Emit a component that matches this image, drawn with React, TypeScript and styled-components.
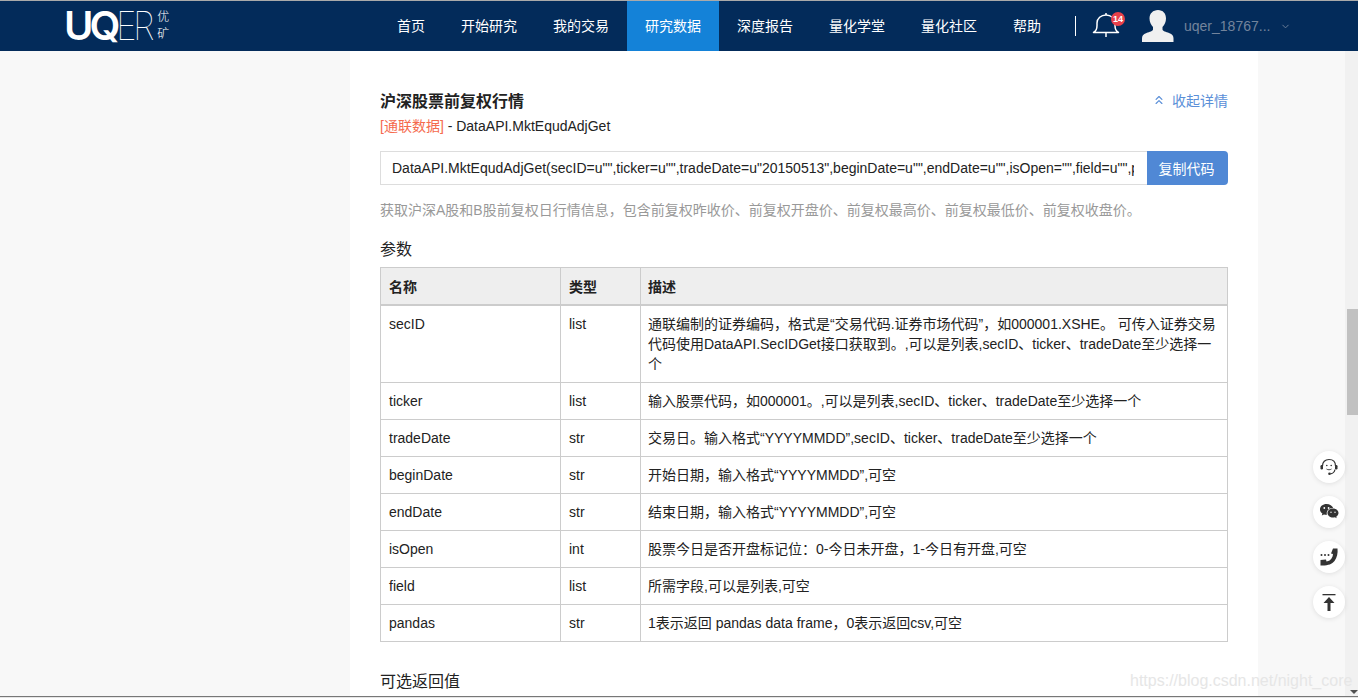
import React from 'react'
import styled, { createGlobalStyle } from 'styled-components'
import { ChevronDown, ChevronsUp } from 'lucide-react'

const FONT = '"Liberation Sans", "Noto Sans CJK SC", sans-serif'

const GlobalStyle = createGlobalStyle`
  html, body {
    margin: 0;
    height: 100%;
    overflow: hidden;
    background: #f8f8f8;
    font-family: ${FONT};
    font-size: 14px;
    color: #222;
  }
  * { box-sizing: border-box; }
`

const Page = styled.div`
  position: relative;
  width: 1358px;
  height: 698px;
  display: flex;
  flex-direction: column;
  overflow: hidden;
  border-top: 1px solid #aaa;
`

const Header = styled.header`
  flex: 0 0 50px;
  background: #032b5a;
  display: flex;
  align-items: stretch;
  padding-left: 64px;
`

const Logo = styled.div`
  display: flex;
  align-items: center;
  width: 315px;
  color: #fff;
`

const LogoBold = styled.span`
  font-family: "Inter", sans-serif;
  font-size: 40px;
  font-weight: 600;
  letter-spacing: -4px;
  line-height: 1;
`

const LogoThin = styled.span`
  display: inline-block;
  margin-right: -5px;
  font-family: "Inter", sans-serif;
  font-size: 40px;
  font-weight: 100;
  letter-spacing: -4px;
  line-height: 1;
  transform: scaleX(0.88);
  transform-origin: left center;
`

const LogoCn = styled.span`
  width: 12px;
  margin-left: 6px;
  font-size: 12px;
  font-weight: 300;
  line-height: 17px;
`

const Nav = styled.nav`
  display: flex;
  align-items: stretch;
`

const NavItem = styled.a<{ $active?: boolean }>`
  display: flex;
  align-items: center;
  padding: 0 18px 2px;
  font-size: 14px;
  color: #fff;
  background: ${({ $active }) => ($active ? '#1482d8' : 'transparent')};
`

const Divider = styled.span`
  width: 1px;
  height: 20px;
  margin: 15px 0 0 16px;
  background: #fff;
`

const BellWrap = styled.div`
  position: relative;
  width: 28px;
  margin-left: 16px;
  padding-top: 11px;
`

const Badge = styled.span`
  position: absolute;
  top: 11px;
  left: 19px;
  width: 14px;
  height: 14px;
  border-radius: 50%;
  background: #e8404a;
  color: #fff;
  font-size: 9px;
  font-weight: 700;
  line-height: 14px;
  text-align: center;
`

const UserArea = styled.div`
  display: flex;
  align-items: center;
  margin-left: 21px;
`

const UserName = styled.span`
  margin-left: 9px;
  padding-bottom: 1px;
  font-size: 14px;
  color: #73849c;
`

const UserCaret = styled.span`
  display: flex;
  margin-left: 10px;
  color: #73849c;
`

const Body = styled.div`
  flex: 1;
  min-height: 0;
  display: flex;
`

const SideSpace = styled.div<{ $width: number }>`
  flex: 0 0 ${({ $width }) => $width}px;
  background: #f8f8f8;
`

const Main = styled.main`
  flex: 0 0 908px;
  min-width: 0;
  background: #fff;
  padding: 39px 30px 0;
`

const ScrollTrack = styled.div`
  flex: 0 0 13px;
  background: #f1f1f1;
  padding: 258px 0 2px 2px;
  display: flex;
  flex-direction: column;
  justify-content: space-between;
`

const ScrollThumb = styled.div`
  height: 106px;
  background: #c1c1c1;
`

const ScrollArrow = styled.span`
  width: 0;
  height: 0;
  margin-left: 3px;
  border-left: 4px solid transparent;
  border-right: 4px solid transparent;
  border-top: 4px solid #505050;
`

const BottomEdge = styled.div`
  flex: 0 0 2px;
  border-top: 1px solid #777;
  background: #e6e6e6;
`

const TitleRow = styled.div`
  display: flex;
  justify-content: space-between;
  align-items: center;
  height: 20px;
`

const Title = styled.h2`
  margin: 0;
  font-size: 16px;
  font-weight: 700;
  color: #222;
`

const Collapse = styled.a`
  display: flex;
  align-items: center;
  gap: 6px;
  font-size: 14px;
  color: #5a8fd8;
`

const SubTitle = styled.div`
  margin-top: 8px;
  font-size: 14px;
  line-height: 16px;
  color: #222;
`

const Source = styled.span`
  color: #f56a4e;
`

const CodeRow = styled.div`
  display: flex;
  height: 34px;
  margin-top: 17px;
`

const CodeBox = styled.div`
  flex: 1;
  min-width: 0;
  padding: 0 13px 0 11px;
  border: 1px solid #ddd;
  border-right: 0;
`

const CodeText = styled.div`
  font-size: 14px;
  line-height: 32px;
  color: #222;
  white-space: nowrap;
  overflow: hidden;
`

const CopyButton = styled.button`
  flex: 0 0 81px;
  padding: 0 2px 0 0;
  border: 0;
  border-radius: 0 4px 4px 0;
  background: #5088d5;
  color: #fff;
  font-family: ${FONT};
  font-size: 14px;
`

const Description = styled.p`
  margin: 17px 0 0;
  font-size: 14px;
  line-height: 16px;
  color: #999;
`

const SectionTitle = styled.h3<{ $top: number }>`
  margin: ${({ $top }) => $top}px 0 0;
  font-size: 16px;
  font-weight: 400;
  line-height: 20px;
  color: #222;
`

const ParamTable = styled.table`
  width: 848px;
  margin-top: 7px;
  border-collapse: collapse;
  table-layout: fixed;
  font-size: 14px;
  color: #222;

  th, td {
    border: 1px solid #ccc;
    padding: 8px;
    text-align: left;
    vertical-align: top;
  }

  th:last-child, td:last-child {
    padding-left: 7px;
  }

  th {
    height: 37px;
    padding-top: 7px;
    padding-bottom: 7px;
    background: #eee;
    border-bottom-width: 2px;
    font-weight: 700;
    vertical-align: middle;
  }

  td {
    line-height: 20px;
  }
`

const FloatButtons = styled.div`
  position: absolute;
  left: 1313px;
  top: 450px;
  display: flex;
  flex-direction: column;
  gap: 13px;
`

const FloatButton = styled.div`
  width: 32px;
  height: 32px;
  border-radius: 50%;
  background: #fff;
  box-shadow: 0 1px 5px rgba(0, 0, 0, 0.1);
  display: flex;
  align-items: center;
  justify-content: center;
`

const Watermark = styled.div`
  position: absolute;
  left: 1130px;
  top: 670px;
  font-size: 16px;
  line-height: 20px;
  white-space: nowrap;
  color: #e6e6e6;
`

const rows: [string, string, string][] = [
  [
    'secID',
    'list',
    '通联编制的证券编码，格式是“交易代码.证券市场代码”，如000001.XSHE。 可传入证券交易代码使用DataAPI.SecIDGet接口获取到。,可以是列表,secID、ticker、tradeDate至少选择一个',
  ],
  ['ticker', 'list', '输入股票代码，如000001。,可以是列表,secID、ticker、tradeDate至少选择一个'],
  ['tradeDate', 'str', '交易日。输入格式“YYYYMMDD”,secID、ticker、tradeDate至少选择一个'],
  ['beginDate', 'str', '开始日期，输入格式“YYYYMMDD”,可空'],
  ['endDate', 'str', '结束日期，输入格式“YYYYMMDD”,可空'],
  ['isOpen', 'int', '股票今日是否开盘标记位：0-今日未开盘，1-今日有开盘,可空'],
  ['field', 'list', '所需字段,可以是列表,可空'],
  ['pandas', 'str', '1表示返回 pandas data frame，0表示返回csv,可空'],
]

const navItems = ['首页', '开始研究', '我的交易', '研究数据', '深度报告', '量化学堂', '量化社区', '帮助']

function BellIcon() {
  return (
    <svg width="28" height="26" viewBox="0 0 28 26" fill="none" stroke="#fff" strokeWidth="1.500">
      <path d="M14 1v2" />
      <path d="M1.500 20.500c2-1 3.500-3 3.500-7V11c0-4.500 4-8 9-8s9 3.500 9 8v2.500c0 4 1.500 6 3.500 7z" strokeLinejoin="round" />
      <path d="M14 20.500V25" />
    </svg>
  )
}

function UserIcon() {
  return (
    <svg width="34" height="34" viewBox="0 0 34 34" fill="#f0f0f0">
      <path d="M17 1c5 0 8 3.500 8 8.500 0 3.500-1.500 6.500-3.500 8.500v2.500c0 1.500 3.500 2.500 6.500 3.500 3.500 1.300 4.500 3 4.500 5.500V33H1v-3.500c0-2.500 1-4.200 4.500-5.500 3-1 6.500-2 6.500-3.500V18c-2-2-3.500-5-3.500-8.500C8.500 4.500 12 1 17 1z" />
    </svg>
  )
}

function HeadsetIcon() {
  return (
    <svg width="20" height="20" viewBox="0 0 20 20" fill="none" stroke="#333" strokeWidth="1.200">
      <path d="M3.500 9C3.500 5 6 2.500 10 2.500S16.500 5 16.500 9" />
      <rect x="1.500" y="8" width="2.500" height="4.500" rx="1.200" fill="#333" stroke="none" />
      <rect x="16" y="8" width="2.500" height="4.500" rx="1.200" fill="#333" stroke="none" />
      <path d="M16 12.500c-.5 2.500-2.300 4-4.500 4.300" />
      <circle cx="10.500" cy="16.800" r="1.300" fill="#333" stroke="none" />
      <circle cx="7.800" cy="8.500" r=".8" fill="#333" stroke="none" />
      <circle cx="12.200" cy="8.500" r=".8" fill="#333" stroke="none" />
      <path d="M7.500 12c1.500 1 3.500 1 5 0" strokeWidth=".9" />
    </svg>
  )
}

function WechatIcon() {
  return (
    <svg width="20" height="20" viewBox="0 0 20 20">
      <path
        fill="#333"
        d="M7.500 2C3.900 2 1 4.400 1 7.400c0 1.700.9 3.200 2.400 4.200L2.800 13.600l2.200-1.200c.8.200 1.600.4 2.500.4h.5c-.2-.5-.3-1-.3-1.600 0-2.900 2.700-5.200 6-5.200h.5C13.400 3.700 10.700 2 7.500 2z"
      />
      <path
        fill="#333"
        d="M19.500 11.100c0-2.500-2.500-4.500-5.500-4.500s-5.500 2-5.500 4.500 2.500 4.500 5.500 4.500c.7 0 1.300-.1 1.900-.3l1.800 1-.5-1.600c1.400-.8 2.300-2.100 2.300-3.600z"
      />
      <g fill="#fff">
        <circle cx="5.300" cy="6" r=".9" />
        <circle cx="9.600" cy="6" r=".9" />
        <circle cx="12" cy="10.300" r=".7" />
        <circle cx="16" cy="10.300" r=".7" />
      </g>
    </svg>
  )
}

function PhoneIcon() {
  return (
    <svg width="20" height="20" viewBox="0 0 20 20" fill="#333">
      <path d="M14 1.500h4.500c.5 5-.5 9-3 12.500-2.500 3-6 4.500-12 4.500H1.500v-5.500l5.500-.5.500 2c2.500-.3 4-1.500 5-3 1-1.500 1.500-3 1.500-4.500l-2-.5z" />
      <circle cx="2.500" cy="8" r="1" />
      <circle cx="6" cy="8" r="1" />
      <circle cx="9.500" cy="8" r="1" />
    </svg>
  )
}

function TopIcon() {
  return (
    <svg width="20" height="20" viewBox="0 0 20 20" fill="#333">
      <rect x="3.500" y="2" width="13" height="1.300" />
      <path d="M10 5l5.500 6H11.500v8h-3v-8H4.500z" />
    </svg>
  )
}

export default function App() {
  return (
    <Page>
      <GlobalStyle />
      <Header>
        <Logo>
          <LogoBold>UQ</LogoBold>
          <LogoThin>ER</LogoThin>
          <LogoCn>优矿</LogoCn>
        </Logo>
        <Nav>
          {navItems.map((item) => (
            <NavItem key={item} $active={item === '研究数据'}>
              {item}
            </NavItem>
          ))}
        </Nav>
        <Divider />
        <BellWrap>
          <BellIcon />
          <Badge>14</Badge>
        </BellWrap>
        <UserArea>
          <UserIcon />
          <UserName>uqer_18767...</UserName>
          <UserCaret>
            <ChevronDown size={11} />
          </UserCaret>
        </UserArea>
      </Header>
      <Body>
        <SideSpace $width={350} />
        <Main>
          <TitleRow>
            <Title>沪深股票前复权行情</Title>
            <Collapse>
              <ChevronsUp size={14} />
              收起详情
            </Collapse>
          </TitleRow>
          <SubTitle>
            <Source>[通联数据]</Source> - DataAPI.MktEqudAdjGet
          </SubTitle>
          <CodeRow>
            <CodeBox>
              <CodeText>
                DataAPI.MktEqudAdjGet(secID=u"",ticker=u"",tradeDate=u"20150513",beginDate=u"",endDate=u"",isOpen="",field=u"",pandas="1")
              </CodeText>
            </CodeBox>
            <CopyButton>复制代码</CopyButton>
          </CodeRow>
          <Description>
            获取沪深A股和B股前复权日行情信息，包含前复权昨收价、前复权开盘价、前复权最高价、前复权最低价、前复权收盘价。
          </Description>
          <SectionTitle $top={22}>参数</SectionTitle>
          <ParamTable>
            <colgroup>
              <col width="180" />
              <col width="80" />
              <col />
            </colgroup>
            <thead>
              <tr>
                <th>名称</th>
                <th>类型</th>
                <th>描述</th>
              </tr>
            </thead>
            <tbody>
              {rows.map(([name, type, desc]) => (
                <tr key={name}>
                  <td>{name}</td>
                  <td>{type}</td>
                  <td>{desc}</td>
                </tr>
              ))}
            </tbody>
          </ParamTable>
          <SectionTitle $top={30}>可选返回值</SectionTitle>
        </Main>
        <SideSpace $width={87} />
        <ScrollTrack>
          <ScrollThumb />
          <ScrollArrow />
        </ScrollTrack>
      </Body>
      <BottomEdge />
      <FloatButtons>
        <FloatButton>
          <HeadsetIcon />
        </FloatButton>
        <FloatButton>
          <WechatIcon />
        </FloatButton>
        <FloatButton>
          <PhoneIcon />
        </FloatButton>
        <FloatButton>
          <TopIcon />
        </FloatButton>
      </FloatButtons>
      <Watermark>https://blog.csdn.net/night_core</Watermark>
    </Page>
  )
}
